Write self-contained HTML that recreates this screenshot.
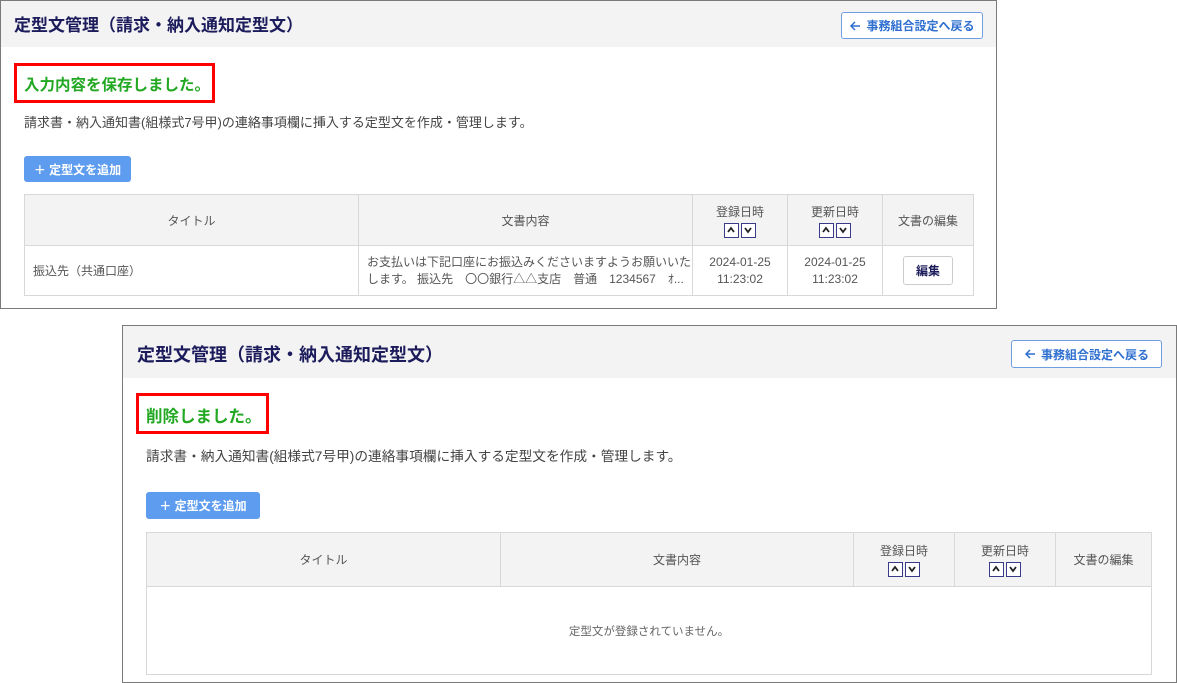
<!DOCTYPE html>
<html><head><meta charset="utf-8"><style>
*{box-sizing:border-box;margin:0;padding:0}
body{width:1177px;height:683px;background:#fff;position:relative;overflow:hidden;font-family:"Liberation Sans","Noto Sans CJK JP",sans-serif;color:#444}
.panel{position:absolute;border:1px solid #7a7a7a;background:#fff}
.hdr{position:absolute;left:0;top:0;right:0;background:#f3f3f3}
.title{position:absolute;font-size:17px;font-weight:bold;color:#1c1c5c;white-space:nowrap}
.back{position:absolute;border:1px solid #6f9ee0;border-radius:3px;background:#fff;color:#2f6fd0;font-size:12px;font-weight:bold;display:flex;align-items:center;justify-content:center;white-space:nowrap}
.back svg{margin-right:5px}
.red{position:absolute;border:3px solid #f00}
.msg{position:absolute;color:#22a822;font-weight:bold;font-size:15.5px;white-space:nowrap}
.desc{position:absolute;font-size:13px;color:#444;white-space:nowrap}
.add{position:absolute;background:#5d9cee;border-radius:3px;color:#fff;font-size:12px;font-weight:bold;display:flex;align-items:center;justify-content:center}
table{position:absolute;border-collapse:collapse;font-size:12px;color:#555}
td,th{border:1px solid #d8d8d8;font-weight:normal;text-align:center;vertical-align:middle}
th{background:#f3f3f3}
.arr{display:inline-block;width:15px;height:15px;border:1.5px solid #3a3a8a;margin:3px 1px 0;vertical-align:middle;position:relative;background:#fff}
.arr svg{position:absolute;left:1px;top:1px}
.edit{display:inline-block;border:1px solid #ccc;border-radius:3px;padding:5px 12px;font-weight:bold;color:#1c1c5c;background:#fff}
</style></head><body>

<div class="panel" style="left:0;top:0;width:997px;height:309px">
 <div class="hdr" style="height:46px"></div>
 <div class="title" style="left:13px;top:10px">定型文管理（請求・納入通知定型文）</div>
 <div class="back" style="left:840px;top:11px;width:142px;height:27px"><svg width="12" height="12"><path d="M11 6H2M6 2L2 6L6 10" stroke="#2f6fd0" stroke-width="1.5" fill="none"/></svg>事務組合設定へ戻る</div>
 <div class="red" style="left:13px;top:62px;width:201px;height:40px"></div>
 <div class="msg" style="left:23px;top:72px">入力内容を保存しました。</div>
 <div class="desc" style="left:23px;top:111px">請求書・納入通知書(組様式7号甲)の連絡事項欄に挿入する定型文を作成・管理します。</div>
 <div class="add" style="left:23px;top:155px;width:107px;height:26px">＋ 定型文を追加</div>
 <table style="left:23px;top:193px;width:950px">
  <tr style="height:51px"><th style="width:334px">タイトル</th><th style="width:334px">文書内容</th><th style="width:95px">登録日時<br><span class="arr"><svg width="10" height="10"><path d="M2 7L5 3L8 7" stroke="#222" stroke-width="1.8" fill="none"/></svg></span><span class="arr"><svg width="10" height="10"><path d="M2 3L5 7L8 3" stroke="#222" stroke-width="1.8" fill="none"/></svg></span></th><th style="width:95px">更新日時<br><span class="arr"><svg width="10" height="10"><path d="M2 7L5 3L8 7" stroke="#222" stroke-width="1.8" fill="none"/></svg></span><span class="arr"><svg width="10" height="10"><path d="M2 3L5 7L8 3" stroke="#222" stroke-width="1.8" fill="none"/></svg></span></th><th>文書の編集</th></tr>
  <tr style="height:50px"><td style="text-align:left;padding-left:8px">振込先（共通口座）</td><td style="text-align:left;padding-left:8px;line-height:17px">お支払いは下記口座にお振込みくださいますようお願いいた<br>します。 振込先　〇〇銀行△△支店　普通　1234567　ｵ...</td><td style="line-height:17px">2024-01-25<br>11:23:02</td><td style="line-height:17px">2024-01-25<br>11:23:02</td><td><span class="edit">編集</span></td></tr>
 </table>
</div>

<div class="panel" style="left:122px;top:325px;width:1055px;height:358px">
 <div class="hdr" style="height:52px"></div>
 <div class="title" style="left:14px;top:15px;font-size:18px">定型文管理（請求・納入通知定型文）</div>
 <div class="back" style="left:888px;top:14px;width:151px;height:28px"><svg width="12" height="12"><path d="M11 6H2M6 2L2 6L6 10" stroke="#2f6fd0" stroke-width="1.5" fill="none"/></svg>事務組合設定へ戻る</div>
 <div class="red" style="left:13px;top:67px;width:133px;height:41px"></div>
 <div class="msg" style="left:23px;top:77px;font-size:16.5px">削除しました。</div>
 <div class="desc" style="left:23px;top:119px;font-size:13.7px">請求書・納入通知書(組様式7号甲)の連絡事項欄に挿入する定型文を作成・管理します。</div>
 <div class="add" style="left:23px;top:166px;width:114px;height:27px">＋ 定型文を追加</div>
 <table style="left:23px;top:206px;width:1006px">
  <tr style="height:54px"><th style="width:354px">タイトル</th><th style="width:353px">文書内容</th><th style="width:101px">登録日時<br><span class="arr"><svg width="10" height="10"><path d="M2 7L5 3L8 7" stroke="#222" stroke-width="1.8" fill="none"/></svg></span><span class="arr"><svg width="10" height="10"><path d="M2 3L5 7L8 3" stroke="#222" stroke-width="1.8" fill="none"/></svg></span></th><th style="width:101px">更新日時<br><span class="arr"><svg width="10" height="10"><path d="M2 7L5 3L8 7" stroke="#222" stroke-width="1.8" fill="none"/></svg></span><span class="arr"><svg width="10" height="10"><path d="M2 3L5 7L8 3" stroke="#222" stroke-width="1.8" fill="none"/></svg></span></th><th>文書の編集</th></tr>
  <tr style="height:88px"><td colspan="5" style="font-size:11.5px;color:#666">定型文が登録されていません。</td></tr>
 </table>
</div>
</body></html>
